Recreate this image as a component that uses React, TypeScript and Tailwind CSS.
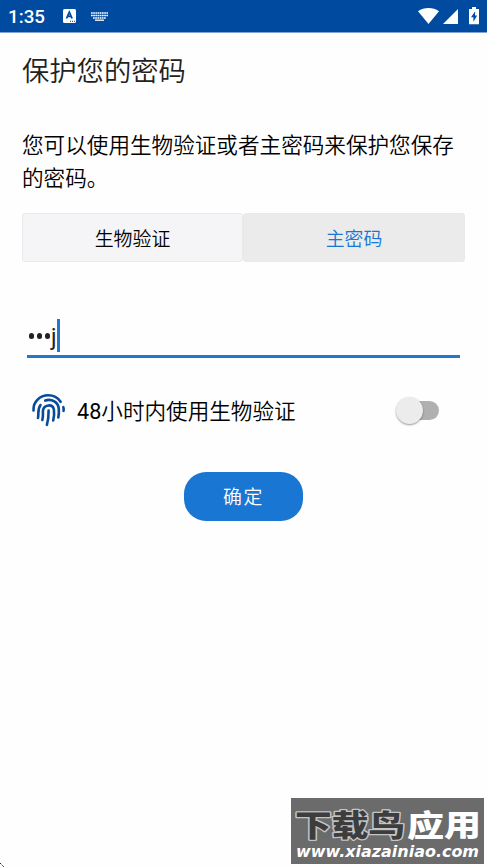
import {useState} from "react";

const cjk = "font-['Roboto','Noto_Sans_CJK_SC',sans-serif]";
const lightCjk = "font-['Noto_Sans_CJK_SC_DemiLight','Noto_Sans_CJK_SC',sans-serif] font-[350]";

function StatusBar() {
    return (
        <header className="h-[33px] shrink-0 bg-[#004a9f] border-b border-[#7fa5d0] flex items-center text-white pl-[8px] pr-[8px]">
            <span className="w-[55px] pt-[2px] text-[18.8px] leading-none font-medium">1:35</span>
            <svg className="w-[13px] h-[14px]" viewBox="0 0 13 14">
                <rect width="13" height="14" rx="1.5" fill="#fff" />
                <path d="M3.5 9.5 6.3 3.2 9.1 9.5M4.5 7.4h3.7" fill="none" stroke="#004a9f" strokeWidth="1.8" />
                <path d="M7 12.3h5" stroke="#004a9f" strokeWidth="1" strokeDasharray="1 1" />
            </svg>
            <svg className="ml-[15px] w-[17px] h-[9px]" viewBox="0 0 17 9">
                <path d="M0 1h17M0 3.6h17M2 6h13" stroke="#fff" strokeWidth="1.5" strokeDasharray="1.7 .5" fill="none" />
                <path d="M4 8.2h9" stroke="#fff" strokeWidth="1.3" />
            </svg>
            <svg className="ml-auto w-[21px] h-[16px]" viewBox="0 0 21 16">
                <path d="M0 3.2C6-1 15-1 21 3.2L10.5 16Z" fill="#fff" />
            </svg>
            <svg className="ml-[4px] w-[15px] h-[15px]" viewBox="0 0 15 15">
                <path d="M15 0v15H0Z" fill="#fff" />
            </svg>
            <svg className="ml-[11px] w-[10px] h-[18px]" viewBox="0 0 10 18">
                <path d="M3 0h4v2h3v15.2H0V2h3Z" fill="#fff" />
                <path d="M6.2 4.3 2 10.2h2.4v4.6L8.2 8.6H6Z" fill="#004a9f" />
            </svg>
        </header>
    );
}

function FingerprintIcon() {
    return (
        <svg className="w-[34px] h-[34px] shrink-0" viewBox="0 0 34 34" fill="none" stroke="#0a4a9c" strokeWidth="2.6" strokeLinecap="round">
            <path d="M1.6 17.5C.8 9.5 7.5 2.3 16.3 2.3c5 0 9.5 2.4 12.3 6.5" />
            <path d="M31.3 14.2c.5 1.3.5 2.5.2 3.6" />
            <path d="M6 25c1-4.500-.8-8.500 2.500-13" />
            <path d="M13.200 7.600c6.500-2.300 13.200 1.800 13.600 8.200.2 3 .1 6-.5 8.700" />
            <path d="M10.300 27c1.300-4 .2-7.500.8-10.200 1.300-5.700 9.900-5.900 10.800-.2.500 3.600.2 7.400-.7 10.900" />
            <path d="M14.900 31.800c1.500-4.800 1.800-9.500 1.700-14.300" />
        </svg>
    );
}

function Watermark() {
    return (
        <div className="absolute left-[291px] top-[798px] w-[193px] h-[66px] bg-[#6b6b6b]">
            <svg className="w-full h-full" viewBox="0 0 193 66">
                <g fontFamily="'Noto Sans CJK SC', sans-serif" fontWeight="900" fontSize="30" strokeLinejoin="round">
                    <text x="4" y="38" textLength="110" lengthAdjust="spacingAndGlyphs" fill="#3d3d3d" stroke="#c4c4c4" strokeWidth="2.6" paintOrder="stroke">下载鸟</text>
                    <text x="116" y="38" textLength="74" lengthAdjust="spacingAndGlyphs" fill="#fff">应用</text>
                </g>
                <text x="5" y="59" textLength="183" lengthAdjust="spacingAndGlyphs" fontFamily="'DejaVu Sans', sans-serif" fontWeight="700" fontStyle="oblique" fontSize="16" fill="#fff">www.xiazainiao.com</text>
            </svg>
        </div>
    );
}

export default function App() {
    const [method, setMethod] = useState("password");
    const [biometric, setBiometric] = useState(false);

    return (
        <div className={`relative w-[487px] h-[867px] overflow-hidden bg-[#fefefe] flex flex-col text-black ${cjk}`}>
            <StatusBar />

            <main className={`px-[22px] pt-[16px] flex flex-col ${lightCjk}`}>
                <h1 className="text-[27.3px] leading-[40px] text-[#222]">保护您的密码</h1>
                <p className="mt-[39px] w-[440px] text-[21.6px] leading-[32.5px]">
                    您可以使用生物验证或者主密码来保护您保存的密码。
                </p>

                {/* Protection method */}
                <div className="mt-[20px] h-[49px] w-[443px] flex text-[18.9px]">
                    <button
                        onClick={() => setMethod("biometric")}
                        className={`w-[221px] pt-px rounded-[3px] border border-[#e9e9eb] ${method === "biometric" ? "bg-[#ebebeb] text-[#1976d2]" : "bg-[#f5f5f8]"}`}
                    >
                        生物验证
                    </button>
                    <button
                        onClick={() => setMethod("password")}
                        className={`flex-1 pt-px rounded-[3px] border border-[#e9e9eb] ${method === "password" ? "bg-[#ebebeb] text-[#1976d2]" : "bg-[#f5f5f8]"}`}
                    >
                        主密码
                    </button>
                </div>

                {/* Password field */}
                <div className="mt-[57px] mx-[5px] h-[39px] border-b-[3px] border-[#2477c9] flex items-start">
                    <span className="flex h-[33px] items-center gap-[2.5px] pl-[1.5px] pt-[1px]">
                        <i className="size-[5.5px] rounded-full bg-[#222]" />
                        <i className="size-[5.5px] rounded-full bg-[#222]" />
                        <i className="size-[5.5px] rounded-full bg-[#222]" />
                    </span>
                    <span className="ml-[1px] w-[6px] font-['Roboto'] font-normal text-[23px] leading-[37px] text-[#222]">j</span>
                    <span className="w-[3px] h-[33px] bg-[#2477c9]" />
                </div>

                {/* Biometric switch */}
                <div className="mt-[34px] h-[36px] pl-[10px] pr-[26px] flex items-center">
                    <FingerprintIcon />
                    <span className="ml-[11px] pt-px text-[21.6px] leading-[32px]">
                        <span className="font-['Roboto'] font-normal">48</span>小时内使用生物验证
                    </span>
                    <button
                        onClick={() => setBiometric(!biometric)}
                        className={`ml-auto w-[43px] h-[28px] flex items-center ${biometric ? "flex-row-reverse" : ""}`}
                    >
                        <span className="size-[27px] shrink-0 z-10 rounded-full bg-[#ececec] shadow-[0_1px_2px_rgba(0,0,0,0.4)]" />
                        <span className="-ml-[22px] w-[38px] h-[19px] rounded-full bg-[#b0b0b0]" />
                    </button>
                </div>

                <button className="mt-[44px] self-center w-[119px] h-[49px] rounded-[22px] bg-[#1976d2] text-white text-[18.9px] tracking-[1.7px]">
                    确定
                </button>
            </main>

            <Watermark />
            <svg className="absolute left-0 bottom-0 w-[5px] h-[5px]" viewBox="0 0 5 5">
                <path d="M0 1 4 5" stroke="#222" strokeWidth="1" strokeDasharray="1.5 .8" />
            </svg>
        </div>
    );
}
